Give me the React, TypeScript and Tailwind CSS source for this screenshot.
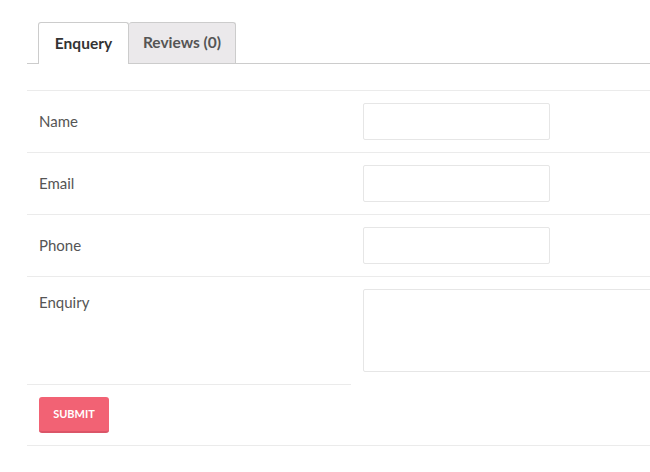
const fields = [
  { label: 'Name', type: 'text' },
  { label: 'Email', type: 'email' },
  { label: 'Phone', type: 'tel' },
]

export default function App() {
  return (
    <div className="w-[650px] h-[472px] overflow-hidden bg-white font-['Lato','Open_Sans',sans-serif] text-[15px] text-[#555]">
      <div className="ml-[27px] w-[700px] pt-[22px]">
        {/* Tabs */}
        <div className="flex border-b border-[#cccccc] pl-[11px]">
          <div className="-mb-px h-[42px] w-[91px] rounded-t-[3px] border border-b-0 border-[#cccccc] bg-white flex items-center justify-center text-[15.5px] font-bold text-[#333]">
            Enquery
          </div>
          <div className="h-[41px] w-[107px] rounded-t-[3px] border border-l-0 border-b-0 border-[#cccccc] bg-[#ebe9eb] flex items-center justify-center text-[15.5px] font-bold text-[#555]">
            Reviews (0)
          </div>
        </div>

        {/* Form table */}
        <div className="mt-[26px] grid grid-cols-[324px_1fr] border-b border-[#ebebeb]">
          {fields.map((f) => (
            <div key={f.label} className="contents">
              <div className="border-t border-[#ebebeb] flex items-center px-3 h-[62px] text-[#555]">{f.label}</div>
              <div className="border-t border-[#ebebeb] px-3 py-3">
                <input type={f.type} className="block h-[37px] w-[187px] rounded-[2px] border border-[#e6e6e6] bg-white outline-none" />
              </div>
            </div>
          ))}
          <div className="border-t border-[#ebebeb] px-3 pt-[14px] h-[108px] text-[#555]">Enquiry</div>
          <div className="row-span-2 border-t border-[#ebebeb] px-3 pt-3">
            <textarea className="block h-[83px] w-[320px] resize-none rounded-[2px] border border-[#e6e6e6] bg-white outline-none" />
          </div>
          <div className="border-t border-[#ebebeb] px-3 py-3 h-[61px]">
            <button className="h-[36px] w-[70px] rounded-[3px] bg-[#f26274] border-b-2 border-[#db5568] text-[11px] font-bold uppercase text-white">
              Submit
            </button>
          </div>
        </div>
      </div>
    </div>
  )
}
